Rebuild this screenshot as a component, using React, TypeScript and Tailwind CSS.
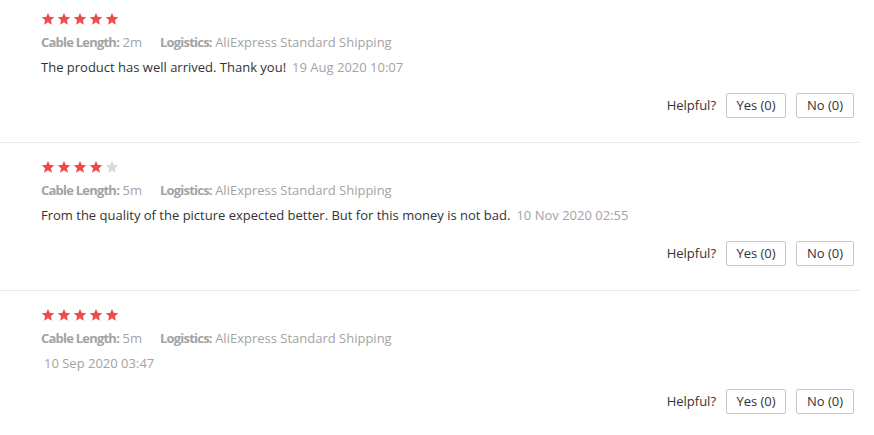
import type { ReactNode } from 'react';

type Review = {
  rating: number;
  length: string;
  text?: string;
  date: string;
};

const reviews: Review[] = [
  { rating: 5, length: '2m', text: 'The product has well arrived. Thank you!', date: '19 Aug 2020 10:07' },
  {
    rating: 4,
    length: '5m',
    text: 'From the quality of the picture expected better. But for this money is not bad.',
    date: '10 Nov 2020 02:55',
  },
  { rating: 5, length: '5m', date: '10 Sep 2020 03:47' },
];

function Star({ filled }: { filled: boolean }) {
  return (
    <svg width="14" height="14" viewBox="0 0 24 24" className={filled ? 'fill-[#f04a4a]' : 'fill-[#d9d9d9]'}>
      <path d="M12 1.5l3.1 7.1 7.7.6-5.9 5 1.8 7.5L12 17.7l-6.7 4 1.8-7.5-5.9-5 7.7-.6z" />
    </svg>
  );
}

function Label({ children }: { children: ReactNode }) {
  return <span className="font-bold tracking-[-0.06em] text-[#a3a3a3]">{children}</span>;
}

function VoteButton({ children, className }: { children: ReactNode; className: string }) {
  return (
    <button
      className={`h-[25px] rounded-[2px] border border-[#c8c8c8] bg-white text-[13px] leading-none text-[#333] ${className}`}
    >
      {children}
    </button>
  );
}

function ReviewItem({ review }: { review: Review }) {
  return (
    <div className="border-b border-[#e8e8e8] pl-[41px] pr-[6px] pt-[16px] first:pt-[11px] pb-[24px]">
      <div className="flex gap-[2px] h-[16px] items-center">
        {[0, 1, 2, 3, 4].map((i) => (
          <Star key={i} filled={i < review.rating} />
        ))}
      </div>
      <div className="mt-[6px] text-[13px] leading-[18px] text-[#a3a3a3]">
        <Label>Cable Length:</Label> {review.length}
        <span className="ml-[18px]">
          <Label>Logistics:</Label> AliExpress Standard Shipping
        </span>
      </div>
      <div className="mt-[7px] text-[13px] leading-[18px] text-[#333]">
        {review.text ? (
          <>
            {review.text}
            <span className="ml-[6px] text-[#a3a3a3]">{review.date}</span>
          </>
        ) : (
          <span className="ml-[3px] text-[#a3a3a3]">{review.date}</span>
        )}
      </div>
      <div className="mt-[17px] flex items-center justify-end gap-[10px] text-[13px] text-[#333]">
        <span>Helpful?</span>
        <VoteButton className="w-[60px]">Yes (0)</VoteButton>
        <VoteButton className="w-[58px]">No (0)</VoteButton>
      </div>
    </div>
  );
}

export default function App() {
  return (
    <div className="w-[874px] h-[435px] bg-white overflow-hidden font-['Open_Sans',sans-serif]">
      <div className="w-[860px]">
        {reviews.map((r, i) => (
          <ReviewItem key={i} review={r} />
        ))}
      </div>
    </div>
  );
}
